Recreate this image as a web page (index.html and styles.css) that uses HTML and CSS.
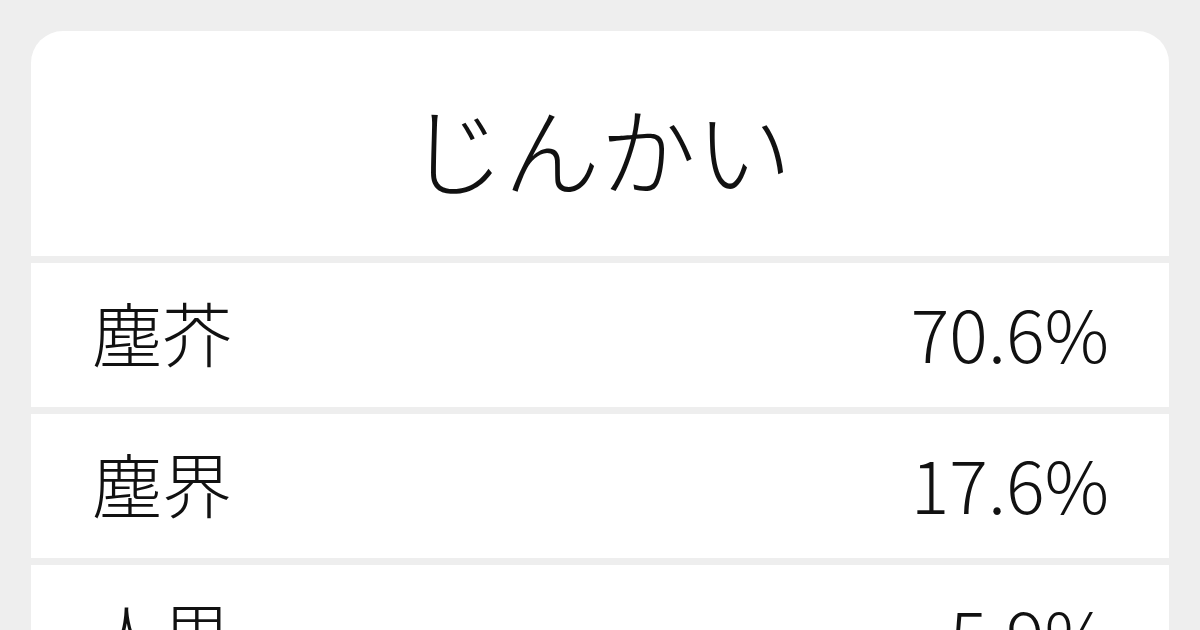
FILE: index.html
```html
<!DOCTYPE html>
<html lang="ja">
<head>
<meta charset="utf-8">
<link rel="stylesheet" href="styles.css">
</head>
<body>
<div class="card">
  <div class="title">じんかい</div>
  <div class="row"><span class="word">塵芥</span><span class="pct">70.6%</span></div>
  <div class="row"><span class="word">塵界</span><span class="pct">17.6%</span></div>
  <div class="row"><span class="word">人界</span><span class="pct">5.9%</span></div>
</div>
</body>
</html>
```
FILE: styles.css
```css
html, body {
  margin: 0;
  padding: 0;
  background: #eeeeee;
  height: 630px;
  overflow: hidden;
}
body {
  padding: 31px 31px 0 31px;
  box-sizing: border-box;
  font-family: "Noto Sans CJK JP", "Noto Sans", sans-serif;
  font-weight: 300;
  color: #111111;
}
.card {
  background: #eeeeee;
  border-radius: 32px 32px 0 0;
  overflow: hidden;
  display: flex;
  flex-direction: column;
  gap: 7px;
}
.title {
  background: #ffffff;
  height: 225px;
  display: flex;
  align-items: center;
  justify-content: center;
  font-size: 96px;
  line-height: 1;
  padding-top: 6px;
  box-sizing: border-box;
}
.row {
  background: #ffffff;
  height: 144px;
  padding: 0 60px 6px 61px;
  box-sizing: border-box;
  display: flex;
  align-items: center;
  justify-content: space-between;
  font-size: 70px;
  line-height: 1;
  flex-shrink: 0;
}
.pct {
  font-size: 72px;
}
```
